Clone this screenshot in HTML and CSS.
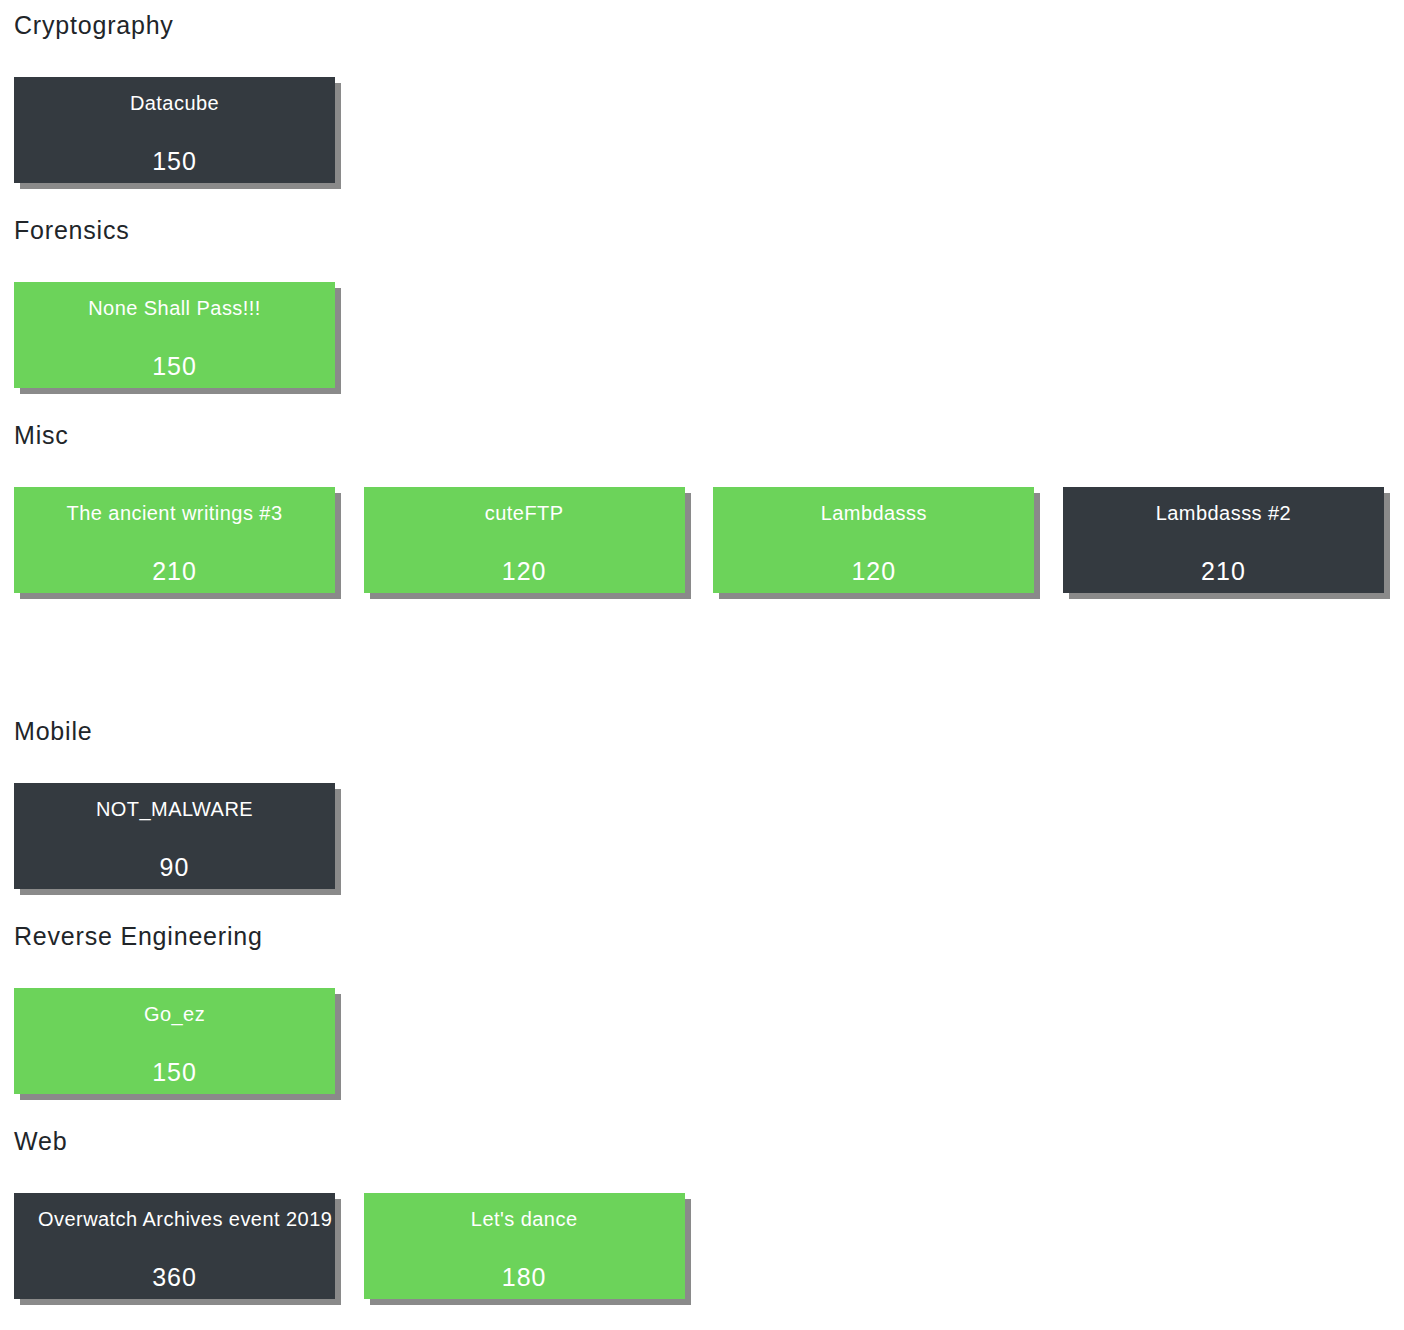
FILE: index.html
```html
<!DOCTYPE html>
<html>
<head>
<meta charset="utf-8">
<link rel="stylesheet" href="styles.css">
</head>
<body>
<div class="page">
  <section class="category">
    <h3 class="cat-title">Cryptography</h3>
    <div class="cards">
      <div class="card dark"><div class="card-name">Datacube</div><div class="card-points">150</div></div>
    </div>
  </section>
  <section class="category">
    <h3 class="cat-title">Forensics</h3>
    <div class="cards">
      <div class="card solved"><div class="card-name">None Shall Pass!!!</div><div class="card-points">150</div></div>
    </div>
  </section>
  <section class="category category-wide">
    <h3 class="cat-title">Misc</h3>
    <div class="cards">
      <div class="card solved"><div class="card-name">The ancient writings #3</div><div class="card-points">210</div></div>
      <div class="card solved"><div class="card-name">cuteFTP</div><div class="card-points">120</div></div>
      <div class="card solved"><div class="card-name">Lambdasss</div><div class="card-points">120</div></div>
      <div class="card dark"><div class="card-name">Lambdasss #2</div><div class="card-points">210</div></div>
    </div>
  </section>
  <section class="category">
    <h3 class="cat-title">Mobile</h3>
    <div class="cards">
      <div class="card dark"><div class="card-name">NOT_MALWARE</div><div class="card-points">90</div></div>
    </div>
  </section>
  <section class="category">
    <h3 class="cat-title">Reverse Engineering</h3>
    <div class="cards">
      <div class="card solved"><div class="card-name">Go_ez</div><div class="card-points">150</div></div>
    </div>
  </section>
  <section class="category">
    <h3 class="cat-title">Web</h3>
    <div class="cards">
      <div class="card dark"><div class="card-name">Overwatch Archives event 2019</div><div class="card-points">360</div></div>
      <div class="card solved"><div class="card-name">Let's dance</div><div class="card-points">180</div></div>
    </div>
  </section>
</div>
</body>
</html>
```

FILE: styles.css
```css
html, body {
  margin: 0;
  padding: 0;
  background: #ffffff;
}
body {
  font-family: "Liberation Sans", Arial, Helvetica, sans-serif;
  color: #212529;
}
.page {
  padding: 10px 0 0 14px;
}
.category {
  margin-bottom: 32px;
}
.category-wide {
  margin-bottom: 123px;
}
.cat-title {
  margin: 0 0 37px 0;
  font-size: 25px;
  letter-spacing: 0.8px;
  font-weight: normal;
  line-height: 30px;
  color: #212529;
}
.cards {
  display: grid;
  grid-template-columns: repeat(4, 321px);
  column-gap: 28.67px;
}
.card {
  height: 106px;
  box-sizing: border-box;
  padding: 12px 24px 0 24px;
  text-align: center;
  color: #ffffff;
  box-shadow: 6px 6px 0 #8a8a8a;
}
.card.dark {
  background: #343a40;
}
.card.solved {
  background: #6cd35a;
}
.card-name {
  font-size: 20px;
  letter-spacing: 0.45px;
  line-height: 28px;
  white-space: nowrap;
}
.card-points {
  margin-top: 29px;
  font-size: 25px;
  letter-spacing: 1px;
  line-height: 30px;
}
```
